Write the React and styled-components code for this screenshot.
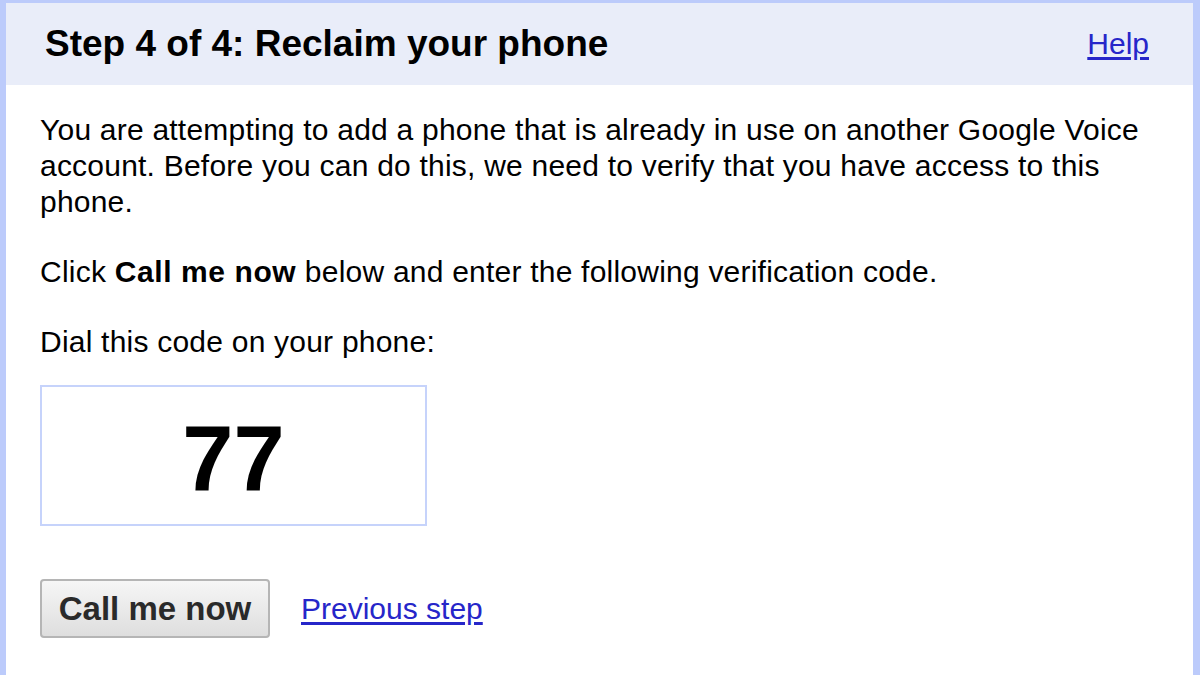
import React from 'react';
import styled, { createGlobalStyle } from 'styled-components';

const GlobalStyle = createGlobalStyle`
  html, body {
    margin: 0;
    padding: 0;
    background: #ffffff;
    overflow: hidden;
  }
  body {
    font-family: "Liberation Sans", Arial, sans-serif;
    color: #000000;
  }
`;

const App = () => {
  return (
    <>
      <GlobalStyle />
      <Frame>
        <Header>
          <Title>Step 4 of 4: Reclaim your phone</Title>
          <Link href="#">Help</Link>
        </Header>
        <Body>
          <Paragraph>
            You are attempting to add a phone that is already in use on another Google Voice
            account. Before you can do this, we need to verify that you have access to this
            phone.
          </Paragraph>
          <Paragraph>
            Click <strong>Call me now</strong> below and enter the following verification code.
          </Paragraph>
          <Paragraph $tight>Dial this code on your phone:</Paragraph>
          <CodeBox>
            <Code>77</Code>
          </CodeBox>
          <Actions>
            <Button type="button">Call me now</Button>
            <Link href="#">Previous step</Link>
          </Actions>
        </Body>
      </Frame>
    </>
  );
};

const Frame = styled.div`
  box-sizing: border-box;
  width: 1200px;
  min-height: 720px;
  border-left: 6px solid #bccbfb;
  border-top: 3px solid #bccbfb;
  border-right: 7px solid #bccbfb;
  background: #ffffff;
`;

const Header = styled.div`
  display: flex;
  align-items: center;
  justify-content: space-between;
  height: 82px;
  padding: 0 44px 0 39px;
  background: #e9edf9;
`;

const Title = styled.h1`
  margin: 0;
  font-size: 37px;
  font-weight: bold;
`;

const Link = styled.a`
  font-size: 30px;
  color: #2626c9;
  text-decoration: underline;
  text-underline-offset: 3px;
`;

const Body = styled.div`
  padding: 27px 34px 0 34px;
`;

const Paragraph = styled.p`
  margin: 0 0 ${p => (p.$tight ? '25px' : '34px')} 0;
  font-size: 30px;
  line-height: 36px;
  letter-spacing: 0.22px;

  strong {
    font-weight: bold;
    letter-spacing: 0.6px;
  }
`;

const CodeBox = styled.div`
  box-sizing: border-box;
  width: 387px;
  height: 141px;
  display: flex;
  align-items: center;
  justify-content: center;
  border: 2px solid #c6d3fb;
`;

const Code = styled.span`
  font-size: 92px;
  font-weight: bold;
  line-height: 1;
  margin-top: 4px;
`;

const Actions = styled.div`
  display: flex;
  align-items: center;
  gap: 31px;
  margin-top: 53px;
`;

const Button = styled.button`
  box-sizing: border-box;
  width: 230px;
  height: 59px;
  font-family: "Liberation Sans", Arial, sans-serif;
  font-size: 33px;
  font-weight: bold;
  color: #2a2a2a;
  background: linear-gradient(#f6f6f6, #dedede);
  border: 2px solid #b5b5b5;
  border-radius: 4px;
  padding: 0;
`;

export default App;
